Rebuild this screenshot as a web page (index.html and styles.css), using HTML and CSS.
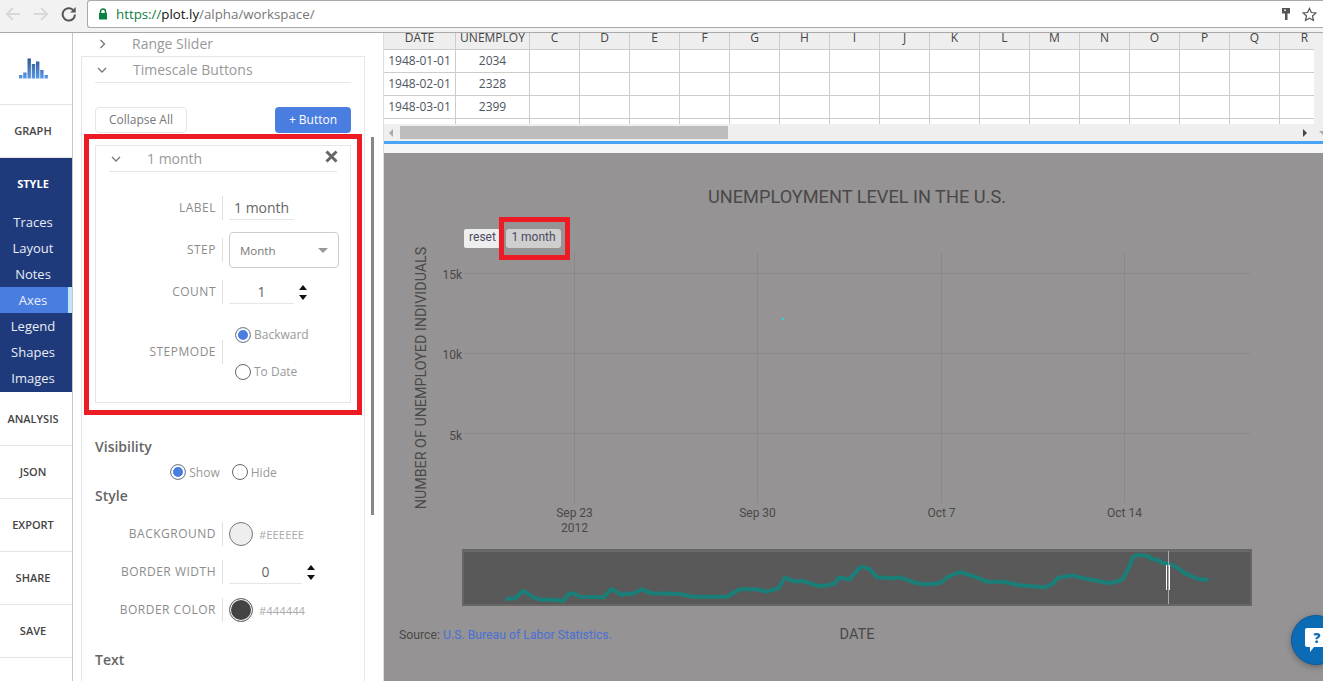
FILE: index.html
```html
<!DOCTYPE html>
<html lang="en">
<head>
    <meta charset="UTF-8">
    <title>Plotly Workspace</title>
    <link rel="stylesheet" href="styles.css">
</head>
<body>
    <header class="browser">
        <svg class="nav-icon" width="18" height="18" viewBox="0 0 18 18"><path d="M16 9H3M9 3 3 9l6 6" fill="none" stroke="#d8d8d8" stroke-width="2"/></svg>
        <svg class="nav-icon" width="18" height="18" viewBox="0 0 18 18"><path d="M2 9h13M9 3l6 6-6 6" fill="none" stroke="#d8d8d8" stroke-width="2"/></svg>
        <svg class="nav-icon" width="18" height="18" viewBox="0 0 18 18"><path d="M15 9.500a6.200 6.200 0 1 1-1.900-4.600" fill="none" stroke="#555" stroke-width="2"/><path d="M15.700 2v5.500h-5.500z" fill="#555"/></svg>
        <div class="urlbar">
            <svg width="10" height="12" viewBox="0 0 10 12"><path d="M2.500 5V3.500a2.500 2.500 0 0 1 5 0V5" fill="none" stroke="#0b8043" stroke-width="1.500"/><rect x="1" y="5" width="8" height="6.500" fill="#0b8043"/></svg>
            <span class="url"><span class="url-scheme">https://</span><span class="url-host">plot.ly</span>/alpha/workspace/</span>
            <svg class="url-key" width="10" height="14" viewBox="0 0 10 14"><path d="M1 1h8v5.500H6.500V13h-2.500V6.500H1z" fill="#555"/><rect x="3" y="2.500" width="2" height="1.500" fill="#ddd"/></svg>
            <svg width="15" height="15" viewBox="0 0 16 16"><path d="M8 1.500l2 4.400 4.800.5-3.600 3.200 1 4.700L8 11.900l-4.200 2.400 1-4.700L1.200 6.400 6 5.900z" fill="none" stroke="#555" stroke-width="1.300"/></svg>
        </div>
    </header>

    <main class="workspace">
        <nav class="sidebar">
            <div class="nav-logo">
                <svg width="29" height="21" viewBox="0 0 29 21">
                    <defs>
                        <linearGradient id="logoBar" x1="0" y1="0" x2="0" y2="21" gradientUnits="userSpaceOnUse">
                            <stop offset="0" stop-color="#2f5590"/>
                            <stop offset="1" stop-color="#5c9be8"/>
                        </linearGradient>
                    </defs>
                    <g fill="url(#logoBar)">
                        <rect x="0" y="17" width="3.400" height="3.500"/>
                        <rect x="4.200" y="14.500" width="3.400" height="6"/>
                        <rect x="8.500" y="0.500" width="3.400" height="20"/>
                        <rect x="12.800" y="6" width="3.400" height="14.500"/>
                        <rect x="17" y="3.500" width="3.400" height="17"/>
                        <rect x="21.200" y="12" width="3.400" height="8.500"/>
                        <rect x="25.500" y="17" width="3.400" height="3.500"/>
                    </g>
                </svg>
            </div>
            <a class="nav-item">GRAPH</a>
            <div class="nav-group">
                <a class="nav-title">STYLE</a>
                <a class="nav-sub">Traces</a>
                <a class="nav-sub">Layout</a>
                <a class="nav-sub">Notes</a>
                <a class="nav-sub active">Axes</a>
                <a class="nav-sub">Legend</a>
                <a class="nav-sub">Shapes</a>
                <a class="nav-sub">Images</a>
            </div>
            <a class="nav-item">ANALYSIS</a>
            <a class="nav-item">JSON</a>
            <a class="nav-item">EXPORT</a>
            <a class="nav-item">SHARE</a>
            <a class="nav-item">SAVE</a>
        </nav>

        <section class="panel">
            <div class="panel-scroll">
                <div class="fold fold-top">
                    <svg class="chev" width="8" height="10" viewBox="0 0 8 10"><path d="M1.500 1l4 4-4 4" fill="none" stroke="#777" stroke-width="1.300"/></svg>
                    <span>Range Slider</span>
                </div>
                <div class="card">
                    <div class="fold fold-open">
                        <svg class="chev" width="10" height="8" viewBox="0 0 10 8"><path d="M1 2l4 4 4-4" fill="none" stroke="#777" stroke-width="1.300"/></svg>
                        <span>Timescale Buttons</span>
                    </div>
                    <div class="btn-row">
                        <button class="btn-ghost">Collapse All</button>
                        <button class="btn-blue">+ Button</button>
                    </div>

                    <div class="callout">
                        <div class="subcard">
                            <div class="subcard-head">
                                <svg width="10" height="8" viewBox="0 0 10 8"><path d="M1 2l4 4 4-4" fill="none" stroke="#777" stroke-width="1.300"/></svg>
                                <span class="subcard-name">1 month</span>
                                <svg class="close" width="13" height="13" viewBox="0 0 13 13"><path d="M1.500 1.500l10 10M11.500 1.500l-10 10" stroke="#666" stroke-width="3"/></svg>
                            </div>
                            <div class="field field-label">
                                <label>LABEL</label>
                                <div class="field-body"><span class="text-input">1 month</span></div>
                            </div>
                            <div class="field field-step">
                                <label>STEP</label>
                                <div class="field-body">
                                    <div class="select">Month<i class="caret"></i></div>
                                </div>
                            </div>
                            <div class="field field-count">
                                <label>COUNT</label>
                                <div class="field-body">
                                    <span class="num-input">1</span>
                                    <span class="spinner"><i></i><i></i></span>
                                </div>
                            </div>
                            <div class="field field-mode">
                                <label>STEPMODE</label>
                                <div class="field-body radios">
                                    <span class="radio on">Backward</span>
                                    <span class="radio">To Date</span>
                                </div>
                            </div>
                        </div>
                    </div>

                    <h4 class="section section-vis">Visibility</h4>
                    <div class="show-row">
                        <span class="radio on">Show</span>
                        <span class="radio">Hide</span>
                    </div>
                    <h4 class="section section-style">Style</h4>
                    <div class="field field-color first">
                        <label>BACKGROUND</label>
                        <div class="field-body">
                            <i class="swatch swatch-light"></i><span class="hex">#EEEEEE</span>
                        </div>
                    </div>
                    <div class="field field-color">
                        <label>BORDER WIDTH</label>
                        <div class="field-body">
                            <span class="num-input wide">0</span>
                            <span class="spinner"><i></i><i></i></span>
                        </div>
                    </div>
                    <div class="field field-color">
                        <label>BORDER COLOR</label>
                        <div class="field-body">
                            <i class="swatch swatch-dark"></i><span class="hex">#444444</span>
                        </div>
                    </div>
                    <h4 class="section section-text">Text</h4>
                </div>
            </div>
            <div class="panel-bar"><i></i></div>
        </section>

        <section class="content">
            <div class="sheet">
                <div class="grid-wrap">
                    <table class="grid">
                        <colgroup>
                            <col class="col-date"><col class="col-unemploy">
                            <col><col><col><col><col><col><col><col><col><col><col><col><col><col><col><col>
                        </colgroup>
                        <thead>
                            <tr><th>DATE</th><th>UNEMPLOY</th><th>C</th><th>D</th><th>E</th><th>F</th><th>G</th><th>H</th><th>I</th><th>J</th><th>K</th><th>L</th><th>M</th><th>N</th><th>O</th><th>P</th><th>Q</th><th>R</th></tr>
                        </thead>
                        <tbody>
                            <tr><td>1948-01-01</td><td>2034</td><td></td><td></td><td></td><td></td><td></td><td></td><td></td><td></td><td></td><td></td><td></td><td></td><td></td><td></td><td></td><td></td></tr>
                            <tr><td>1948-02-01</td><td>2328</td><td></td><td></td><td></td><td></td><td></td><td></td><td></td><td></td><td></td><td></td><td></td><td></td><td></td><td></td><td></td><td></td></tr>
                            <tr><td>1948-03-01</td><td>2399</td><td></td><td></td><td></td><td></td><td></td><td></td><td></td><td></td><td></td><td></td><td></td><td></td><td></td><td></td><td></td><td></td></tr>
                            <tr><td></td><td></td><td></td><td></td><td></td><td></td><td></td><td></td><td></td><td></td><td></td><td></td><td></td><td></td><td></td><td></td><td></td><td></td></tr>
                        </tbody>
                    </table>
                </div>
                <div class="hscroll">
                    <i class="arrow-left"></i>
                    <div class="hscroll-track"><span class="hscroll-thumb"></span></div>
                    <i class="arrow-right"></i>
                    <i class="arrow-down"></i>
                </div>
            </div>
            <div class="divider"></div>

            <svg class="plot" width="939" height="528" viewBox="384 153 939 528">
                <g stroke="#8a8888" fill="none">
                    <path d="M464 273.500H1250M464 353.500H1250M464 433.500H1250"/>
                    <path d="M574.500 253V503M757.500 253V503M941.500 253V503M1124.500 253V503"/>
                </g>
                <text class="plot-title" x="857" y="203" text-anchor="middle">UNEMPLOYMENT LEVEL IN THE U.S.</text>
                <text class="axis-title" transform="translate(426 378) rotate(-90)" text-anchor="middle">NUMBER OF UNEMPLOYED INDIVIDUALS</text>

                <rect x="464" y="229" width="36" height="19" rx="2" fill="#eee"/>
                <rect x="506" y="229" width="55" height="19" rx="3" fill="#cfcfcf"/>
                <text class="tick selector" x="482.500" y="241" text-anchor="middle">reset</text>
                <text class="tick selector" x="533.500" y="241" text-anchor="middle">1 month</text>
                <rect x="501.500" y="219.500" width="66" height="38" fill="none" stroke="#ed1c24" stroke-width="5"/>

                <g class="tick" text-anchor="end">
                    <text x="462" y="279">15k</text>
                    <text x="462" y="359">10k</text>
                    <text x="462" y="440">5k</text>
                </g>
                <g class="tick" text-anchor="middle">
                    <text x="574.500" y="517">Sep 23</text>
                    <text x="574.500" y="532">2012</text>
                    <text x="757.500" y="517">Sep 30</text>
                    <text x="941.500" y="517">Oct 7</text>
                    <text x="1124.500" y="517">Oct 14</text>
                </g>
                <rect x="782" y="318" width="2" height="2" fill="#22dcd2"/>

                <rect x="463" y="550" width="788" height="55" fill="#595959" stroke="#666" stroke-width="2"/>
                <path d="M464 551.500H1250" stroke="#6c6c6c"/>
                <polyline fill="none" stroke="#1a7f78" stroke-width="4" stroke-linejoin="round" points="505.700,599 515,598.300 523.300,590.700 533.300,597.300 540,599.700 553.300,599.700 563.300,601 568.300,594.300 573.300,593.300 580,596.700 603.300,597.300 611.700,589 621.700,595 626.700,593.300 631.700,594.300 641.700,589.300 651.700,593.300 680,594 693.300,596.700 726.700,596.700 740,589.300 756.700,589.300 766.700,591.700 778.300,588.300 785,577.700 795,581.700 801.700,580.700 816.700,585.700 826.700,585.700 835,583.300 838.300,577.700 850,579.300 858.300,569 861.700,566.700 870,569.300 876.700,577.300 893.300,578.300 900,577.300 916.700,583.300 926.700,584.300 940,583.300 948.300,576.700 960,572 976.700,577.300 986.700,581.700 1003.300,581.700 1020,585.300 1045,587.300 1053.300,583.300 1058.300,577.700 1073.300,575.300 1083.300,578.300 1110,583.300 1121.700,580 1127.700,570 1133.300,556.700 1138.300,555 1148.300,556 1151.700,559.300 1156.700,559.300 1161.700,562.700 1170,564 1178.300,568.300 1185,573.300 1198.300,579 1208.300,580"/>
                <path d="M1168.500 551V604" stroke="#aaa"/>
                <path d="M1166.500 565V590M1169.500 565V590" stroke="#fff"/>

                <text class="source" x="399" y="639">Source: <tspan fill="#4a70d8">U.S. Bureau of Labor Statistics.</tspan></text>
                <text class="date-title" x="857" y="639" text-anchor="middle">DATE</text>
            </svg>

            <svg class="help" width="44" height="64" viewBox="0 0 44 64">
                <circle cx="25" cy="32" r="24.500" fill="#0b6cb5" stroke="#0a5a9a"/>
                <path d="M14 22a2 2 0 0 1 2-2H44V39H23l-4 5v-5h-3a2 2 0 0 1-2-2z" fill="#fff"/>
                <text class="help-mark" x="26" y="35" text-anchor="middle">?</text>
            </svg>
        </section>
    </main>
</body>
</html>
```

FILE: styles.css
```css
html, body {
    margin: 0;
    padding: 0;
}
body {
    width: 1323px;
    height: 681px;
    overflow: hidden;
    display: flex;
    flex-direction: column;
    font-family: 'Open Sans', 'Liberation Sans', sans-serif;
    background: #fff;
}

/* browser bar */
.browser {
    flex: none;
    height: 33px;
    box-sizing: border-box;
    display: flex;
    align-items: flex-start;
    padding-left: 4px;
    background: #f2f2f2;
    border-bottom: 1px solid #a9a9a9;
}
.nav-icon {
    margin-top: 5px;
    margin-right: 10px;
}
.urlbar {
    flex: 1;
    height: 28px;
    box-sizing: border-box;
    margin-left: -1px;
    padding: 0 6px 0 10px;
    display: flex;
    align-items: center;
    background: #fff;
    border: 1px solid #a9a9a9;
    border-right: none;
    border-radius: 3px 0 0 3px;
}
.url {
    flex: 1;
    margin-left: 8px;
    font-size: 13.300px;
    color: #777;
}
.url-scheme {
    color: #0b8043;
}
.url-host {
    color: #111;
}
.url-key {
    margin-right: 11px;
}

.workspace {
    flex: 1;
    min-height: 0;
    display: flex;
}

/* left nav */
.sidebar {
    flex: none;
    width: 73px;
    box-sizing: border-box;
    border-right: 1px solid #c8c8c8;
    background: #fff;
}
.nav-logo {
    height: 72px;
    box-sizing: border-box;
    display: flex;
    align-items: center;
    justify-content: center;
    padding-right: 6px;
    border-bottom: 1px solid #e4e4e4;
}
.nav-item {
    height: 53px;
    box-sizing: border-box;
    display: flex;
    align-items: center;
    justify-content: center;
    padding: 0 6px 2px 0;
    border-bottom: 1px solid #e4e4e4;
    font-size: 11px;
    font-weight: 600;
    color: #444;
}
.nav-group {
    height: 234px;
    margin-bottom: 1px;
    background: #1f3a7a;
}
.nav-title {
    height: 51px;
    display: flex;
    align-items: center;
    justify-content: center;
    padding-right: 6px;
    font-size: 11px;
    font-weight: 700;
    color: #fff;
}
.nav-sub {
    height: 26px;
    display: flex;
    align-items: center;
    justify-content: center;
    padding-right: 6px;
    font-size: 13px;
    color: #e8edf7;
}
.nav-sub.active {
    background: #4a7de0;
    border-right: 4px solid #bfe3f7;
    padding-right: 2px;
}

/* style panel */
.panel {
    flex: none;
    width: 311px;
    display: flex;
    background: #fff;
    border-right: 1px solid #ddd;
    box-sizing: border-box;
}
.panel-scroll {
    width: 284px;
    padding-left: 8px;
    box-sizing: content-box;
    overflow: hidden;
}
.panel-bar {
    margin-left: 6px;
    width: 3px;
    flex: none;
}
.panel-bar i {
    display: block;
    margin-top: 104px;
    height: 378px;
    background: #888;
}
.fold {
    display: flex;
    align-items: center;
    font-size: 14px;
    color: #999;
}
.fold-top {
    height: 21px;
    padding: 0 0 2px 18px;
}
.fold-top span {
    margin-left: 25px;
}
.card {
    width: 284px;
    box-sizing: border-box;
    padding: 0 13px;
    border: 1px solid #e6e6e6;
    border-bottom: none;
    height: 640px;
}
.fold-open {
    height: 25px;
    border-bottom: 1px solid #e6e6e6;
    padding-left: 2px;
}
.fold-open span {
    margin-left: 26px;
}
.btn-row {
    display: flex;
    justify-content: space-between;
    margin-top: 24px;
}
.btn-row button {
    height: 26px;
    box-sizing: border-box;
    border-radius: 4px;
    font-family: inherit;
    font-size: 12px;
    padding: 0 0 2px;
}
.btn-ghost {
    width: 92px;
    background: #fff;
    border: 1px solid #e6e6e6;
    color: #777;
}
.btn-blue {
    width: 76px;
    background: #4a7de0;
    border: none;
    color: #fff;
}

.callout {
    width: 278px;
    height: 281px;
    box-sizing: border-box;
    margin: 1px 0 0 -11px;
    padding: 6px 6px 7px;
    border: 5px solid #ed1c24;
}
.subcard {
    height: 100%;
    box-sizing: border-box;
    border: 1px solid #e6e6e6;
}
.subcard-head {
    height: 26px;
    box-sizing: border-box;
    margin: 0 13px;
    padding: 0 0 0 2px;
    display: flex;
    align-items: center;
    border-bottom: 1px solid #e6e6e6;
}
.subcard-name {
    flex: 1;
    margin-left: 26px;
    font-size: 14px;
    color: #999;
}
.close {
    margin: -4px -1px 0 0;
}

/* label + control rows */
.field {
    display: flex;
    align-items: center;
}
.field label {
    width: 127px;
    flex: none;
    box-sizing: border-box;
    padding-right: 6px;
    text-align: right;
    font-size: 12px;
    line-height: 24px;
    color: #8c8c8c;
    border-right: 1px solid #e0e0e0;
    letter-spacing: .5px;
}
.field-color label {
    width: 128px;
}
.field-body {
    display: flex;
    align-items: center;
    margin-left: 6px;
}
.field-label {
    margin-top: 24px;
    height: 24px;
}
.field-step {
    margin-top: 12px;
    height: 36px;
}
.field-count {
    margin-top: 12px;
    height: 24px;
}
.field-mode {
    margin-top: 12px;
    height: 72px;
}
.text-input, .num-input {
    display: block;
    width: 65px;
    height: 23px;
    box-sizing: border-box;
    border-bottom: 1px solid #e6e6e6;
    font-size: 14px;
    line-height: 22px;
    color: #666;
}
.text-input {
    padding-left: 5px;
}
.num-input {
    text-align: center;
}
.num-input.wide {
    width: 73px;
}
.select {
    width: 110px;
    height: 36px;
    box-sizing: border-box;
    padding: 0 10px;
    display: flex;
    align-items: center;
    justify-content: space-between;
    border: 1px solid #ccc;
    border-radius: 4px;
    font-size: 11.500px;
    color: #777;
}
.caret {
    border-left: 5px solid transparent;
    border-right: 5px solid transparent;
    border-top: 5px solid #999;
}
.spinner {
    margin-left: 5px;
    display: flex;
    flex-direction: column;
    gap: 5px;
}
.spinner i {
    display: block;
    border-left: 4px solid transparent;
    border-right: 4px solid transparent;
}
.spinner i:first-child {
    border-bottom: 5px solid #111;
}
.spinner i:last-child {
    border-top: 5px solid #111;
}
.radios {
    flex-direction: column;
    align-items: flex-start;
    margin-left: 12px;
    padding-top: 2px;
    gap: 21px;
}
.radio {
    display: flex;
    align-items: center;
    height: 16px;
    font-size: 12px;
    color: #999;
}
.radio::before {
    content: "";
    width: 16px;
    height: 16px;
    box-sizing: border-box;
    margin-right: 3px;
    border: 1px solid #666;
    border-radius: 50%;
    background: #fff;
}
.radio.on::before {
    border-color: #888;
    background: #4a7de0;
    box-shadow: inset 0 0 0 2px #fff;
}

.section {
    margin: 0;
    font-size: 14px;
    line-height: 20px;
    font-weight: 600;
    color: #666;
}
.section-vis {
    margin-top: 22px;
}
.section-style {
    margin-top: 6px;
}
.section-text {
    margin-top: 28px;
}
.show-row {
    display: flex;
    justify-content: center;
    gap: 12px;
    margin: 7px 0 0 1px;
}
.field-color {
    height: 24px;
    margin-top: 14px;
}
.field-color.first {
    margin-top: 16px;
}
.swatch {
    display: block;
    width: 24px;
    height: 24px;
    box-sizing: border-box;
    border-radius: 50%;
    border: 1px solid #777;
}
.swatch-light {
    background: #eee;
}
.swatch-dark {
    background: #444;
    box-shadow: inset 0 0 0 1px #fff;
}
.hex {
    margin-left: 6px;
    font-size: 11.300px;
    color: #aaa;
}

/* data grid */
.content {
    flex: 1;
    min-width: 0;
    position: relative;
    background: #959393;
    overflow: hidden;
}
.sheet {
    height: 108px;
    background: #efefef;
    position: relative;
    overflow: hidden;
}
.grid-wrap {
    width: 930px;
    height: 91px;
    overflow: hidden;
    background: #fff;
}
.grid {
    table-layout: fixed;
    border-collapse: collapse;
    width: 946px;
    margin-left: -1px;
    font-size: 12px;
    color: #4d5560;
}
.grid col {
    width: 50px;
}
.grid .col-date {
    width: 72px;
}
.grid .col-unemploy {
    width: 74px;
}
.grid th, .grid td {
    padding: 0;
    text-align: center;
    overflow: hidden;
    white-space: nowrap;
    border-right: 1px solid #ccc;
    border-bottom: 1px solid #ccc;
}
.grid th:first-child, .grid td:first-child {
    border-left: 1px solid #ccc;
}
.grid th {
    height: 16px;
    line-height: 9px;
    vertical-align: top;
    background: #eee;
    font-weight: 400;
    color: #444;
}
.grid td {
    height: 20px;
    padding-bottom: 2px;
}
.hscroll {
    height: 17px;
    background: #efefef;
    display: flex;
    align-items: center;
}
.hscroll-track {
    flex: 1;
    margin-left: 7px;
    height: 13px;
}
.hscroll-thumb {
    display: block;
    width: 328px;
    height: 13px;
    background: #bdbdbd;
}
.arrow-left, .arrow-right {
    display: block;
    border-top: 4px solid transparent;
    border-bottom: 4px solid transparent;
}
.arrow-left {
    margin-left: 5px;
    border-right: 4px solid #aaa;
}
.arrow-right {
    margin-right: 12px;
    border-left: 4px solid #444;
}
.arrow-down {
    display: block;
    margin-right: -4px;
    border-left: 4px solid transparent;
    border-right: 4px solid transparent;
    border-top: 4px solid #aaa;
}
.divider {
    height: 9px;
    background: #f6f6f6;
    border-top: 3px solid #4aa3f5;
}
.plot {
    display: block;
}
.plot text {
    font-family: Roboto, 'Liberation Sans', sans-serif;
    fill: #4a4848;
}
.plot-title {
    font-size: 18.200px;
}
.axis-title {
    font-size: 14.300px;
}
.date-title {
    font-size: 14.500px;
}
.source {
    font-size: 12.250px;
}
.plot .tick, .tick text {
    font-size: 12px;
}
.plot .selector {
    fill: #4a4a60;
}
.help {
    position: absolute;
    right: -12px;
    top: 575px;
    filter: drop-shadow(0 2px 3px rgba(0,0,0,0.3));
}
.help-mark {
    font-family: 'Open Sans', sans-serif;
    font-size: 14px;
    font-weight: 800;
    fill: #0b6cb5;
}
```
